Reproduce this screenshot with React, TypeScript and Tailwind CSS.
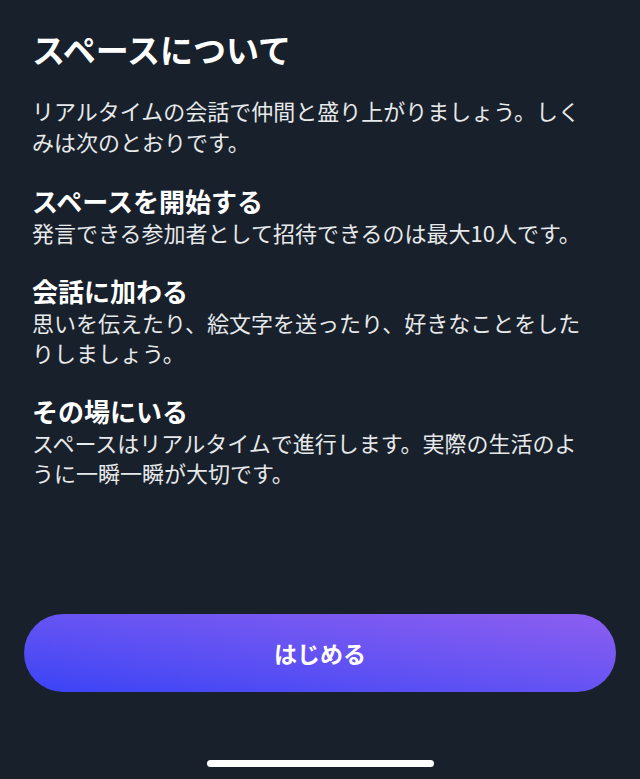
export default function App() {
  const sections = [
    {
      title: "スペースを開始する",
      body: "発言できる参加者として招待できるのは最大10人です。",
    },
    {
      title: "会話に加わる",
      body: "思いを伝えたり、絵文字を送ったり、好きなことをしたりしましょう。",
    },
    {
      title: "その場にいる",
      body: "スペースはリアルタイムで進行します。実際の生活のように一瞬一瞬が大切です。",
    },
  ];

  return (
    <div
      className="flex h-[779px] w-[640px] flex-col bg-[#17202b] text-white"
      style={{ fontFamily: '"Noto Sans CJK JP", "Noto Sans", sans-serif' }}
    >
      <div className="flex-1 pl-8 pr-[52px] pt-[29px]">
        <h1 className="text-[33px] font-bold leading-[40px]">スペースについて</h1>
        <p className="mt-[26px] text-[22px] leading-[31px] text-[#e7e9ea]">
          リアルタイムの会話で仲間と盛り上がりましょう。しくみは次のとおりです。
        </p>
        {sections.map((s) => (
          <div key={s.title} className="mt-[28px]">
            <h2 className="text-[26px] font-bold leading-[32px]">{s.title}</h2>
            <p className="text-[22px] leading-[30px] text-[#e7e9ea]">{s.body}</p>
          </div>
        ))}
      </div>
      <div className="px-6 pb-[87px]">
        <button
          type="button"
          className="flex h-[78px] w-full items-center justify-center rounded-full bg-gradient-to-tr from-[#3a43f5] to-[#8d5ef0] text-[23px] font-bold text-white"
        >
          はじめる
        </button>
      </div>
      <div className="absolute left-[207px] top-[760px] h-[7px] w-[227px] rounded-full bg-white" />
    </div>
  );
}
